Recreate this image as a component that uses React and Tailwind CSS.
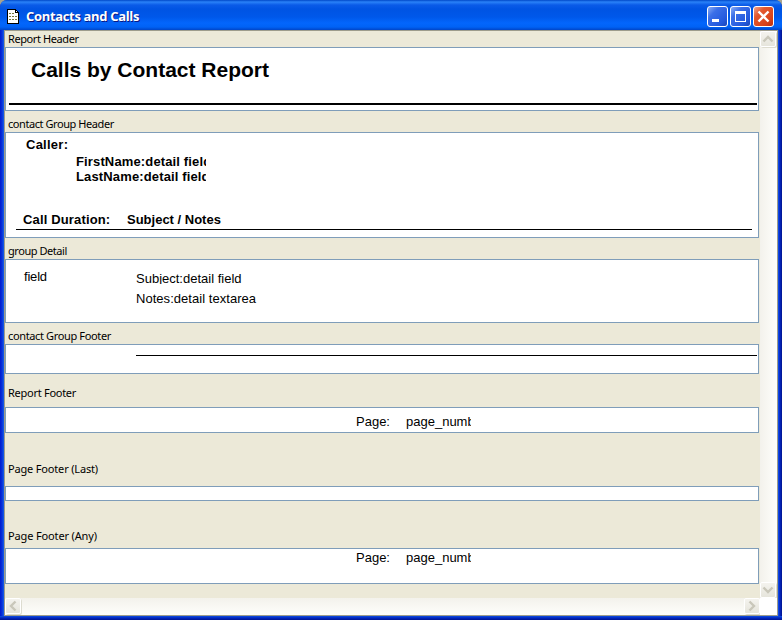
const label = "whitespace-nowrap font-['Noto_Sans',sans-serif] text-[11px] leading-[14px] pl-[3px] text-black";

function Section({ title, gap, pad, height, spacing = "", children }) {
  return (
    <section>
      <h2 className={`${label} ${gap} ${pad}`}>
        <span className={spacing}>{title}</span>
      </h2>
      <div className={`w-[754px] overflow-hidden border border-[#7f9db9] bg-white ${height}`}>{children}</div>
    </section>
  );
}

function CaptionButton({ close = false, children }) {
  return (
    <div
      className={`flex size-[21px] items-center justify-center rounded-[3px] border border-white ${
        close
          ? "bg-[linear-gradient(135deg,#f0a68e_0%,#e3582f_30%,#d9421a_75%,#b82f10_100%)]"
          : "bg-[linear-gradient(135deg,#8badf5_0%,#3b6fe8_30%,#2459dd_75%,#1b46b8_100%)]"
      }`}
    >
      <svg width="19" height="19" viewBox="0 0 19 19" shapeRendering="crispEdges">
        {children}
      </svg>
    </div>
  );
}

function ScrollButton({ d }) {
  return (
    <div className="flex h-[16px] w-[16px] shrink-0 items-center justify-center rounded-[2px] border border-white bg-gradient-to-b from-[#f4f3ee] to-[#e6e5dc] shadow-[1px_1px_0_#dddcd0]">
      <svg width="14" height="14" viewBox="0 0 14 14" fill="none" stroke="#c9c7ba" strokeWidth="2.4">
        <path d={d} />
      </svg>
    </div>
  );
}

function PageNumber({ pad }) {
  return (
    <div className={`flex pl-[350px] text-[13px] leading-[16px] ${pad}`}>
      <span className="w-[50px]">Page:</span>
      <span className="w-[65px] overflow-hidden whitespace-nowrap">page_number</span>
    </div>
  );
}

export default function App() {
  return (
    <div className="h-[620px] w-[782px] overflow-hidden bg-[#a8a48f] font-['Liberation_Sans',Arial,sans-serif] text-black">
      <div className="flex h-[620px] flex-col rounded-t-[7px] bg-[linear-gradient(90deg,#0019cf_0px,#0831d9_2px,#1660e8_4px,#1660e8_778px,#0831d9_779px,#00138c_782px)]">
        <header className="flex h-[30px] shrink-0 items-center rounded-t-[7px] bg-[linear-gradient(180deg,#0048c8_0px,#2a82f8_2px,#0a5be8_5px,#0054e3_9px,#0058ea_17px,#0366fc_23px,#0062f5_27px,#0045c8_30px)] pl-[7px] pr-[8px] pt-[2px]">
          <svg width="12" height="15" viewBox="0 0 12 15" shapeRendering="crispEdges">
            <path d="M0 0h9v1h1v1h1v1h1v12H0z" fill="#000" />
            <path d="M1 1h7v3h3v10H1z" fill="#fff" />
            <path d="M9 2h1v1H9z" fill="#fff" />
            <path d="M2 4h2v1H2zM5 4h2v1H5zM2 7h2v1H2zM5 7h2v1H5zM8 7h2v1H8zM2 10h2v1H2zM5 10h2v1H5zM8 10h2v1H8z" fill="#77773c" />
          </svg>
          <h1 className="ml-[7px] grow whitespace-nowrap font-['Open_Sans',sans-serif] text-[13px] font-bold leading-[18px] tracking-[-0.33px] text-white [text-shadow:1px_1px_#0a1883]">
            Contacts and Calls
          </h1>
          <div className="flex gap-[2px]">
            <CaptionButton><path d="M4 12h7v3H4z" fill="#fff" /></CaptionButton>
            <CaptionButton><path d="M4 4h11v11H4zM5 7v7h9V7z" fill="#fff" fillRule="evenodd" /></CaptionButton>
            <CaptionButton close><path d="M4.5 4.5l10 10M14.5 4.5l-10 10" stroke="#fff" strokeWidth="2.4" shapeRendering="auto" /></CaptionButton>
          </div>
        </header>
        <div className="mx-[4px] flex h-[586px] flex-col border border-[#9d9c8c] bg-[#ece9d8]">
          <div className="flex h-[567px]">
            <main className="w-[755px]">
              <Section title="Report Header" gap="pt-[1px]" pad="pb-[1px]" height="h-[64px]" spacing="tracking-[-0.4px]">
                <p className="whitespace-nowrap pl-[25px] pt-[10px] text-[21px] font-bold leading-[24px]">Calls by Contact Report</p>
                <div className="ml-[3px] mt-[21px] h-[2px] w-[748px] bg-black" />
              </Section>
              <Section title="contact Group Header" gap="pt-[6px]" pad="pb-[1px]" height="h-[106px]" spacing="tracking-[-0.43px]">
                <div className="whitespace-nowrap text-[13px] font-bold leading-[15px]">
                  <p className="pl-[20px] pt-[4px] tracking-[0.25px]">Caller:</p>
                  <p className="ml-[70px] mt-[2px] w-[130px] overflow-hidden tracking-[0.14px]">FirstName:detail field</p>
                  <p className="ml-[70px] w-[130px] overflow-hidden tracking-[0.14px]">LastName:detail field</p>
                  <div className="mt-[28px] flex pl-[17px]">
                    <span className="w-[104px] tracking-[0.15px]">Call Duration:</span>
                    <span>Subject / Notes</span>
                  </div>
                  <div className="ml-[10px] mt-[2px] h-px w-[736px] bg-black" />
                </div>
              </Section>
              <Section title="group Detail" gap="pt-[6px]" pad="pb-[1px]" height="h-[64px]" spacing="tracking-[-0.45px]">
                <div className="flex whitespace-nowrap pl-[18px] text-[13px] leading-[16px]">
                  <span className="w-[112px] pt-[9px] tracking-[-0.2px]">field</span>
                  <div className="pt-[11px]">
                    <p className="h-[13px] overflow-hidden">Subject:detail field</p>
                    <p className="pt-[7px] tracking-[0.04px]">Notes:detail textarea</p>
                  </div>
                </div>
              </Section>
              <Section title="contact Group Footer" gap="pt-[6px]" pad="pb-[1px]" height="h-[30px]" spacing="tracking-[-0.36px]">
                <div className="ml-[130px] mt-[10px] h-px w-[621px] bg-black" />
              </Section>
              <Section title="Report Footer" gap="pt-[12px]" pad="pb-[7px]" height="h-[26px]" spacing="tracking-[-0.27px]">
                <PageNumber pad="pt-[6px]" />
              </Section>
              <Section title="Page Footer (Last)" gap="pt-[29px]" pad="pb-[10px]" height="h-[15px]" spacing="tracking-[-0.17px]" />
              <Section title="Page Footer (Any)" gap="pt-[28px]" pad="pb-[5px]" height="h-[36px]" spacing="tracking-[-0.14px]">
                <PageNumber pad="pt-[1px]" />
              </Section>
            </main>
            <div className="flex w-[17px] flex-col justify-between bg-gradient-to-r from-[#f3f2ec] to-[#fefefb]">
              <ScrollButton d="M2.5 9.5L7 5l4.500 4.500" />
              <ScrollButton d="M2.500 4.500L7 9l4.500-4.500" />
            </div>
          </div>
          <div className="flex h-[17px]">
            <div className="flex w-[755px] justify-between bg-gradient-to-b from-[#f3f2ec] to-[#fefefb]">
              <ScrollButton d="M9.500 2.500L5 7l4.500 4.500" />
              <ScrollButton d="M4.500 2.500L9 7l-4.500 4.500" />
            </div>
            <div className="w-[17px] bg-white" />
          </div>
        </div>
        <div className="h-[4px] bg-[linear-gradient(180deg,#1150e0,#0026c0_50%,#00138c)]" />
      </div>
    </div>
  );
}
